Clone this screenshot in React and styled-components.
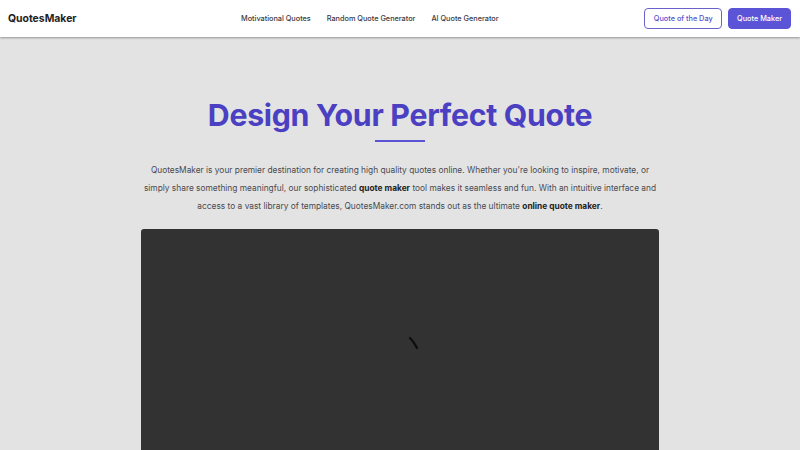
import React from "react";
import styled, { createGlobalStyle } from "styled-components";

const Global = createGlobalStyle`
  html, body { margin: 0; padding: 0; background: #e3e3e3; }
  body { font-family: Inter, "Noto Sans", Arial, sans-serif; overflow: hidden; }
  * { box-sizing: border-box; }
`;

const Page = styled.div`
  width: 800px;
  height: 450px;
  display: flex;
  flex-direction: column;
  background: #e3e3e3;
  overflow: hidden;
`;

const Header = styled.header`
  height: 37px;
  flex: none;
  background: #ffffff;
  box-shadow: 0 1px 2px rgba(0,0,0,0.35);
  display: flex;
  align-items: center;
  padding: 0 9px 0 8px;
  position: relative;
  z-index: 1;
`;

const Logo = styled.div`
  font-size: 10.4px;
  font-weight: 700;
  color: #1f1f24;
  width: 233px;
`;

const Nav = styled.nav`
  display: flex;
  gap: 16px;
  flex: 1;
`;

const NavLink = styled.a`
  font-size: 7.3px;
  font-weight: 500;
  color: #3a3a44;
  text-decoration: none;
`;

const Actions = styled.div`
  display: flex;
  gap: 6px;
`;

const Button = styled.button`
  font-family: inherit;
  font-size: 7.3px;
  font-weight: 500;
  height: 21px;
  padding: 0 ${p => (p.$primary ? "8px" : "8.5px")};
  border-radius: 4px;
  border: 1px solid ${p => (p.$primary ? "#5b54d6" : "#6a62c8")};
  background: ${p => (p.$primary ? "#5b54d6" : "#ffffff")};
  color: ${p => (p.$primary ? "#ffffff" : "#5a52cf")};
`;

const Main = styled.main`
  display: flex;
  flex-direction: column;
  align-items: center;
  padding-top: 59px;
`;

const Title = styled.h1`
  margin: 0;
  font-size: 30.3px;
  font-weight: 700;
  letter-spacing: -0.3px;
  color: #4b3fc2;
  line-height: 38px;
`;

const Rule = styled.div`
  width: 50px;
  height: 2px;
  background: #5b54d6;
  margin-top: 6px;
`;

const Intro = styled.p`
  width: 518px;
  margin: 19px 0 0;
  font-size: 8.35px;
  line-height: 18px;
  color: #4a4a4f;
  text-align: center;
  b { color: #222; font-weight: 700; }
`;

const Canvas = styled.div`
  width: 518px;
  height: 240px;
  margin-top: 14px;
  background: #323232;
  border-radius: 3px;
  display: flex;
  justify-content: center;
  padding-top: 106px;
  padding-left: 28px;
`;

function Spinner() {
  return (
    <svg width="14" height="16" viewBox="0 0 14 16">
      <path d="M3 3 C6 6 8 9 10 13" stroke="#0d0d0d" strokeWidth="2.2" fill="none" strokeLinecap="round" />
    </svg>
  );
}

export default function App() {
  return (
    <Page>
      <Global />
      <Header>
        <Logo>QuotesMaker</Logo>
        <Nav>
          <NavLink>Motivational Quotes</NavLink>
          <NavLink>Random Quote Generator</NavLink>
          <NavLink>AI Quote Generator</NavLink>
        </Nav>
        <Actions>
          <Button>Quote of the Day</Button>
          <Button $primary>Quote Maker</Button>
        </Actions>
      </Header>
      <Main>
        <Title>Design Your Perfect Quote</Title>
        <Rule />
        <Intro>
          QuotesMaker is your premier destination for creating high quality quotes online. Whether you're looking to inspire, motivate, or simply share something meaningful, our sophisticated <b>quote maker</b> tool makes it seamless and fun. With an intuitive interface and access to a vast library of templates, QuotesMaker.com stands out as the ultimate <b>online quote maker</b>.
        </Intro>
        <Canvas>
          <Spinner />
        </Canvas>
      </Main>
    </Page>
  );
}
